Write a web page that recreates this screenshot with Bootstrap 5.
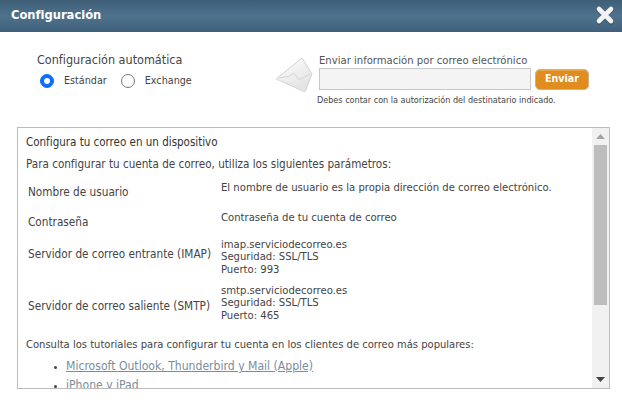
<!DOCTYPE html>
<html lang="es">
<head>
<meta charset="utf-8">
<title>Configuración</title>
<link href="https://cdn.jsdelivr.net/npm/bootstrap@5.3.0/dist/css/bootstrap.min.css" rel="stylesheet">
<style>
html,body{width:622px;height:404px;overflow:hidden;background:#fff;}
body{font-family:"DejaVu Sans Condensed","DejaVu Sans",sans-serif;font-size:11.6px;color:#444;line-height:1.2;}
.dlg-head{height:32px;background:linear-gradient(#3e5e76,#4f728d 50%,#3f607a);padding:0 7px 2px 11px;}
.dlg-title{font-size:12.8px;font-weight:700;color:#fff;}
.top-area{height:95px;padding-left:37px;}
.auto-col{width:238px;padding-top:20px;}
.auto-title{font-size:12.5px;margin-bottom:7px;color:#444;}
.radio-row{padding-left:3px;gap:7px;font-size:10.7px;}
.radio-row .form-check-input{width:14px;height:14px;margin:0;flex:none;border:1.5px solid #777;}
.radio-row .form-check-input:checked{border-color:#0d6efd;}
.radio-lab{margin:0 7px 0 3px;}
.mail-col{padding-top:22px;}
.env-ico{margin:3px 6px 0 0;}
.send-lab{font-size:11.2px;margin-bottom:1px;color:#555;}
.send-input{width:212px;height:22px;background:#f4f4f4;border:1px solid #c8c8c8;border-radius:0;}
.send-btn{width:54px;height:21px;background:#e08c1e;border:1px solid #c9b08f;border-radius:5px;color:#fff;font-weight:700;font-size:10.6px;padding:0;margin-left:4px;box-shadow:inset 0 1px 0 #eaa345;}
.send-note{font-size:9px;margin-top:5px;margin-left:-2px;color:#444;}
.info-box{height:262px;margin:0 12px 0 17px;border:1px solid #bdbdbd;overflow:hidden;}
.info-body{overflow:hidden;padding:8px 8px 0 8px;}
.info-head{font-size:11.5px;margin-bottom:8px;color:#333;}
.info-p{margin-bottom:9px;}
.param-row{display:flex;}
.param-name{width:195px;padding-left:2px;font-size:11.7px;color:#444;flex:none;}
.param-val{line-height:12.5px;font-size:11.2px;padding-top:1px;}
.r1{height:30px;} .r2{height:27px;} .r3{height:46px;} .r4{height:54px;}
.pad-a{padding-top:4px;} .pad-b{padding-top:9px;} .pad-c{padding-top:15px;}
.tut-lead{font-size:11.1px;}
.tut-list{margin:8px 0 0;padding-left:40px;list-style:disc;}
.tut-list li{margin-bottom:4px;font-size:12.1px;}
.tut-list li::marker{font-size:9px;}
.tut-list a{color:#7a8d9b;}
.track{width:17px;background:#f1f1f1;flex:none;}
.arrow{height:17px;}
.thumb{margin-left:2px;width:13px;height:160px;background:#bdbdbd;}
</style>
</head>
<body>
<div class="dlg-head d-flex align-items-center justify-content-between">
  <span class="dlg-title">Configuración</span>
  <svg width="20" height="20" viewBox="0 0 20 20"><path d="M4 4 L16 16 M16 4 L4 16" stroke="#3a4c5a" stroke-opacity=".5" stroke-width="5.5" stroke-linecap="round" transform="translate(0 1)"/><path d="M4 4 L16 16 M16 4 L4 16" stroke="#f3f3f3" stroke-width="4.6" stroke-linecap="round"/></svg>
</div>
<div class="top-area d-flex">
  <div class="auto-col">
    <div class="auto-title">Configuración automática</div>
    <div class="radio-row d-flex align-items-center">
      <input class="form-check-input" type="radio" name="modo" checked aria-label="Estándar">
      <span class="radio-lab">Estándar</span>
      <input class="form-check-input" type="radio" name="modo" aria-label="Exchange">
      <span class="radio-lab">Exchange</span>
    </div>
  </div>
  <div class="mail-col d-flex align-items-start">
    <svg class="env-ico" width="38" height="36" viewBox="0 0 38 36">
      <defs><linearGradient id="g" x1="0" y1="0" x2=".6" y2="1"><stop offset="0" stop-color="#ffffff"/><stop offset="1" stop-color="#e2e2e2"/></linearGradient></defs>
      <path d="M1 22 L27 1 L37 17 L30 35 Z" fill="url(#g)" stroke="#d2d2d2"/>
      <path d="M4 21 L15 19 L19 16 L24 23 L35 17" fill="none" stroke="#d6d6d6"/>
      <path d="M1 22 L17 27 L30 35" fill="none" stroke="#e6e6e6"/>
      <path d="M24 23 L30 35" fill="none" stroke="#e9e9e9"/>
    </svg>
    <div>
      <div class="send-lab">Enviar información por correo electrónico</div>
      <div class="d-flex align-items-center">
        <input class="send-input" type="text" aria-label="Correo electrónico">
        <button class="btn send-btn" type="button">Enviar</button>
      </div>
      <div class="send-note">Debes contar con la autorización del destinatario indicado.</div>
    </div>
  </div>
</div>
<div class="info-box d-flex">
  <div class="info-body flex-grow-1">
    <div class="info-head">Configura tu correo en un dispositivo</div>
    <div class="info-p">Para configurar tu cuenta de correo, utiliza los siguientes parámetros:</div>
    <div class="param-row r1"><div class="param-name pad-a">Nombre de usuario</div><div class="param-val">El nombre de usuario es la propia dirección de correo electrónico.</div></div>
    <div class="param-row r2"><div class="param-name pad-a">Contraseña</div><div class="param-val">Contraseña de tu cuenta de correo</div></div>
    <div class="param-row r3"><div class="param-name pad-b">Servidor de correo entrante (IMAP)</div><div class="param-val">imap.serviciodecorreo.es<br>Seguridad: SSL/TLS<br>Puerto: 993</div></div>
    <div class="param-row r4"><div class="param-name pad-c">Servidor de correo saliente (SMTP)</div><div class="param-val">smtp.serviciodecorreo.es<br>Seguridad: SSL/TLS<br>Puerto: 465</div></div>
    <div class="tut-lead">Consulta los tutoriales para configurar tu cuenta en los clientes de correo más populares:</div>
    <ul class="tut-list">
      <li><a href="#">Microsoft Outlook, Thunderbird y Mail (Apple)</a></li>
      <li><a href="#">iPhone y iPad</a></li>
    </ul>
  </div>
  <div class="track d-flex flex-column">
    <div class="arrow d-flex align-items-center justify-content-center"><svg width="9" height="5" viewBox="0 0 9 5"><path d="M4.5 0 L9 5 H0 Z" fill="#a3a3a3"/></svg></div>
    <div class="thumb"></div>
    <div class="flex-grow-1"></div>
    <div class="arrow d-flex align-items-center justify-content-center"><svg width="9" height="5" viewBox="0 0 9 5"><path d="M0 0 H9 L4.5 5 Z" fill="#444"/></svg></div>
  </div>
</div>
</body>
</html>
